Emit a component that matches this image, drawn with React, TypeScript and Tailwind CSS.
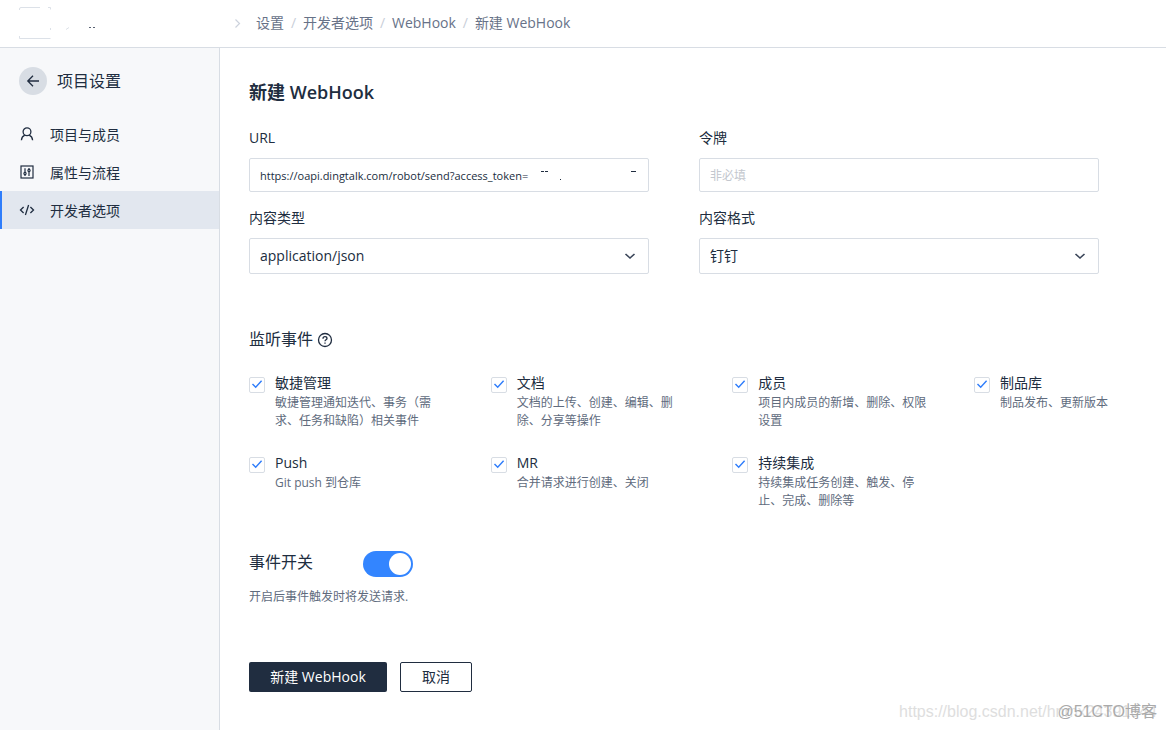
import React, { useState } from "react";

type EventItem = { id: string; title: string; text: string };

const EVENTS: EventItem[] = [
  { id: "agile", title: "敏捷管理", text: "敏捷管理通知迭代、事务（需求、任务和缺陷）相关事件" },
  { id: "docs", title: "文档", text: "文档的上传、创建、编辑、删除、分享等操作" },
  { id: "members", title: "成员", text: "项目内成员的新增、删除、权限设置" },
  { id: "artifacts", title: "制品库", text: "制品发布、更新版本" },
  { id: "push", title: "Push", text: "Git push 到仓库" },
  { id: "mr", title: "MR", text: "合并请求进行创建、关闭" },
  { id: "ci", title: "持续集成", text: "持续集成任务创建、触发、停止、完成、删除等" },
];

const CRUMBS = ["设置", "开发者选项", "WebHook", "新建 WebHook"];

function UserIcon() {
  return (
    <svg className="size-4" viewBox="0 0 16 16" fill="none" stroke="currentColor" strokeWidth="1.3">
      <circle cx="8" cy="5.8" r="3.9" />
      <path d="M2.4 14.2c.2-2.400 1.500-4.200 3.400-5M13.600 14.200c-.2-2.400-1.500-4.200-3.400-5" />
    </svg>
  );
}

function SlidersIcon() {
  return (
    <svg className="size-4" viewBox="0 0 16 16" fill="none" stroke="currentColor" strokeWidth="1.2">
      <rect x="2" y="2" width="12" height="12" />
      <path d="M6 4.200v4M6 10.800v1.200M10 4v1.200M10 7.800v4.200" />
      <circle cx="6" cy="9.500" r="1.100" />
      <circle cx="10" cy="6.500" r="1.100" />
    </svg>
  );
}

function CodeIcon() {
  return (
    <svg className="size-4" viewBox="0 0 16 16" fill="none" stroke="currentColor" strokeWidth="1.3">
      <path d="M4.600 5 1.500 8l3.100 3M11.400 5l3.100 3-3.100 3M9.600 3 6.400 13" />
    </svg>
  );
}

function Chevron() {
  return (
    <svg className="pointer-events-none absolute right-[13px] top-3 size-3" viewBox="0 0 12 12" fill="none" stroke="#3a4558" strokeWidth="1.6">
      <path d="m1.500 4 4.500 4 4.500-4" />
    </svg>
  );
}

const NAV = [
  { label: "项目与成员", icon: <UserIcon />, active: false },
  { label: "属性与流程", icon: <SlidersIcon />, active: false },
  { label: "开发者选项", icon: <CodeIcon />, active: true },
];

function SelectField({ id, label, value }: { id: string; label: string; value: string }) {
  return (
    <div>
      <label htmlFor={id} className="block text-sm leading-5">{label}</label>
      <div className="relative mt-2.5">
        <select id={id} className="block h-9 w-full appearance-none rounded-xs border border-[#d8dde4] bg-white px-2.5 text-sm outline-none">
          <option>{value}</option>
        </select>
        <Chevron />
      </div>
    </div>
  );
}

function EventOption({ item }: { item: EventItem }) {
  const [checked, setChecked] = useState(true);
  return (
    <label htmlFor={item.id} className="flex items-start gap-2.5">
      <span className="relative mt-1 size-4 shrink-0">
        <input
          id={item.id}
          type="checkbox"
          checked={checked}
          onChange={() => setChecked(!checked)}
          className="block size-4 appearance-none rounded-xs border border-[#d8dde4] bg-white"
        />
        {checked && (
          <svg className="pointer-events-none absolute inset-0 size-4" viewBox="0 0 16 16" fill="none" stroke="#2f7dfb" strokeWidth="1.4">
            <path d="m3.500 7 3.200 3.300L12.600 3.800" />
          </svg>
        )}
      </span>
      <span className="block max-w-[170px]">
        <span className="block text-sm leading-5">{item.title}</span>
        <span className="mt-px block text-xs leading-[18px] text-[#606b7d]">{item.text}</span>
      </span>
    </label>
  );
}

export default function App() {
  const [enabled, setEnabled] = useState(true);
  return (
    <div className="relative flex min-h-screen flex-col bg-white font-['Open_Sans','Noto_Sans_CJK_SC',sans-serif] text-[#202d40]">
      <header className="flex h-12 items-center border-b border-[#d8dde4] pl-[18px]">
        <svg className="h-12 w-[84px] shrink-0" viewBox="0 0 84 48" fill="none" stroke="#dce1e8">
          <path d="M1.500 10V9Q1.500 7.500 3 7.500H22M30 7.500h2.500v2M32.500 28v2M1.500 36v2.500H32.500" />
          <path d="m48 29.500 3-2" />
          <path d="M71 27.500h2M75 27.500h2" stroke="#596273" />
        </svg>
        <svg className="ml-[131px] size-3 shrink-0" viewBox="0 0 12 12" fill="none" stroke="#ccd2dc" strokeWidth="1.2">
          <path d="m2.500 1.500 4 4-4 4" />
        </svg>
        <nav aria-label="路径" className="ml-[11px] flex items-center pb-0.5 text-sm text-[#677288]">
          {CRUMBS.map((c, i) => (
            <React.Fragment key={c}>
              {i > 0 && <span className="w-[19px] text-center text-[#c8ced8]">/</span>}
              <a href="#">{c}</a>
            </React.Fragment>
          ))}
        </nav>
      </header>

      <div className="flex flex-1">
        <aside className="w-[220px] shrink-0 border-r border-[#d8dde4] bg-[#f7f8fa]">
          <div className="flex items-center gap-2.5 pb-5 pl-[19px] pt-[19px]">
            <button aria-label="返回" className="flex size-7 items-center justify-center rounded-full bg-[#d8dde4]">
              <svg className="size-4" viewBox="0 0 16 16" fill="none" stroke="currentColor" strokeWidth="1.3">
                <path d="M14 8H2.800M8 2.800 2.800 8 8 13.200" />
              </svg>
            </button>
            <h2 className="text-base leading-6">项目设置</h2>
          </div>
          <nav>
            {NAV.map((n) => (
              <a
                key={n.label}
                href="#"
                className={
                  n.active
                    ? "flex h-[38px] items-center gap-[15px] border-l-2 border-[#2f7dfb] bg-[#e2e7ef] pl-[17px] text-sm"
                    : "flex h-[38px] items-center gap-[15px] border-l-2 border-transparent pl-[17px] text-sm"
                }
              >
                {n.icon}
                <span className="pt-0.5">{n.label}</span>
              </a>
            ))}
          </nav>
        </aside>

        <main className="min-w-0 flex-1 pb-8 pl-[29px] pt-8">
          <h1 className="text-lg font-semibold leading-6">新建 WebHook</h1>

          <div className="mt-6 grid max-w-[850px] grid-cols-2 gap-x-[50px] gap-y-4">
            <div>
              <label htmlFor="url" className="block text-sm leading-5">URL</label>
              <div className="relative mt-2.5">
                <input
                  id="url"
                  defaultValue="https://oapi.dingtalk.com/robot/send?access_token="
                  className="block h-[34px] w-full rounded-xs border border-[#d8dde4] px-2.5 text-[11px] outline-none"
                />
                <svg className="pointer-events-none absolute left-[290px] top-2 h-4 w-[100px]" viewBox="0 0 100 16" stroke="#202d40">
                  <path d="M2 5.500h3M6 5.500h3M92 5.500h5M21 13.500h1" />
                </svg>
              </div>
            </div>
            <div>
              <label htmlFor="token" className="block text-sm leading-5">令牌</label>
              <input
                id="token"
                placeholder="非必填"
                className="mt-2.5 block h-[34px] w-full rounded-xs border border-[#d8dde4] px-2.5 text-xs outline-none placeholder:text-[#c3c7ce]"
              />
            </div>
            <SelectField id="type" label="内容类型" value="application/json" />
            <SelectField id="format" label="内容格式" value="钉钉" />
          </div>

          <h2 className="mt-[53px] flex items-center gap-1 text-base leading-6">
            监听事件
            <svg className="mt-0.5 size-4" viewBox="0 0 16 16" fill="none" stroke="currentColor" strokeWidth="1.3">
              <circle cx="8" cy="8" r="6.500" />
              <path d="M6 6.700C6 5.400 6.800 4.700 8 4.700s2 .7 2 1.800c0 1.300-2 1.400-2 2.800M8 10.500v1.200" />
            </svg>
          </h2>
          <div className="mt-[22px] grid grid-cols-[repeat(3,minmax(0,1fr))_minmax(0,192px)] gap-y-[23px]">
            {EVENTS.map((e) => (
              <EventOption key={e.id} item={e} />
            ))}
          </div>

          <div className="mt-10 flex items-start gap-[50px]">
            <label htmlFor="enabled" className="text-base leading-6">事件开关</label>
            <input
              id="enabled"
              type="checkbox"
              role="switch"
              checked={enabled}
              onChange={() => setEnabled(!enabled)}
              className="mt-px h-[26px] w-[50px] appearance-none rounded-full bg-[#c3c7ce] p-px before:block before:size-6 before:rounded-full before:border before:border-transparent before:bg-white before:bg-clip-padding checked:bg-[#3385ff] checked:before:ml-6"
            />
          </div>
          <p className="mt-[11px] text-xs leading-[18px] text-[#606b7d]">开启后事件触发时将发送请求.</p>

          <div className="mt-14 flex gap-[13px]">
            <button className="h-[30px] w-[138px] rounded-xs bg-[#202d40] text-sm text-white">新建 WebHook</button>
            <button className="h-[30px] w-[72px] rounded-xs border border-[#202d40] bg-white text-sm">取消</button>
          </div>
        </main>
      </div>

      <div className="pointer-events-none absolute bottom-1.5 right-[9px] whitespace-nowrap font-['Liberation_Sans','Noto_Sans_CJK_SC',sans-serif] text-base leading-6">
        <span className="absolute right-0 top-0 text-[#dedede]">https://blog.csdn.net/hnmx24391644</span>
        <span className="relative text-[#aaaaaa]">@51CTO博客</span>
      </div>
    </div>
  );
}
